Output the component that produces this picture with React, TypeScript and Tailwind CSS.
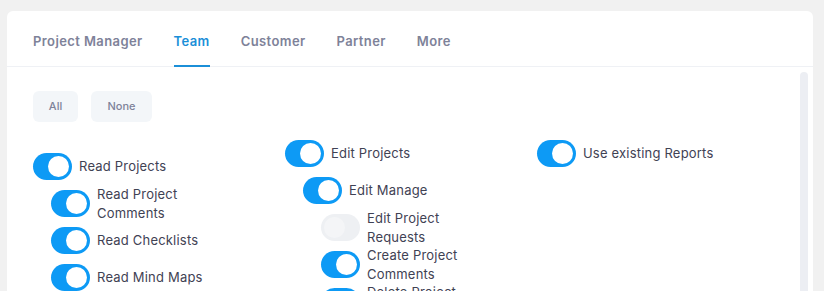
import React from 'react';

type Perm = { label: string; on: boolean; level: number };

const columns: { offset: string; items: Perm[] }[] = [
  {
    offset: 'mt-[13px]',
    items: [
      { label: 'Read Projects', on: true, level: 0 },
      { label: 'Read Project Comments', on: true, level: 1 },
      { label: 'Read Checklists', on: true, level: 1 },
      { label: 'Read Mind Maps', on: true, level: 1 },
    ],
  },
  {
    offset: 'mt-0',
    items: [
      { label: 'Edit Projects', on: true, level: 0 },
      { label: 'Edit Manage', on: true, level: 1 },
      { label: 'Edit Project Requests', on: false, level: 2 },
      { label: 'Create Project Comments', on: true, level: 2 },
      { label: 'Delete Project Comments', on: true, level: 2 },
    ],
  },
  {
    offset: 'mt-0',
    items: [{ label: 'Use existing Reports', on: true, level: 0 }],
  },
];

const tabs = ['Project Manager', 'Team', 'Customer', 'Partner', 'More'];

function Toggle({ on }: { on: boolean }) {
  return (
    <div
      className={`w-[39px] h-[27px] shrink-0 rounded-full flex items-center px-[3px] ${
        on ? 'bg-[#0d9af5] justify-end' : 'bg-[#eef0f3] justify-start'
      }`}
    >
      <div className={`w-[21px] h-[21px] rounded-full ${on ? 'bg-white' : 'bg-[#f4f5f7]'}`} />
    </div>
  );
}

function Row({ p }: { p: Perm }) {
  const indent = p.level === 0 ? 'pl-0' : p.level === 1 ? 'pl-[18px]' : 'pl-[36px]';
  return (
    <div className={`flex items-center h-[27px] mb-[10px] ${indent}`}>
      <Toggle on={p.on} />
      <span
        className={`ml-[7px] text-[13px] leading-[19px] tracking-[0.2px] text-[#3f4254] ${
          p.level > 0 ? 'max-w-[118px]' : 'whitespace-nowrap'
        }`}
      >
        {p.label}
      </span>
    </div>
  );
}

export default function App() {
  return (
    <div
      className="h-screen overflow-hidden bg-[#f1f1f1] pt-[11px] pl-[7px] pr-[11px]"
      style={{ fontFamily: 'Inter, "Noto Sans", sans-serif' }}
    >
      <div className="bg-white rounded-[6px] h-[400px] flex flex-col">
        {/* Tabs */}
        <div className="flex items-end h-[56px] pl-[26px] gap-[31px] border-b border-[#eff1f5]">
          {tabs.map(tab => (
            <div
              key={tab}
              className={`h-full flex items-center pt-[6px] text-[13px] font-semibold tracking-[0.4px] border-b-2 -mb-px ${
                tab === 'Team' ? 'text-[#1b8fd8] border-[#1b8fd8]' : 'text-[#7e8299] border-transparent'
              }`}
            >
              {tab}
            </div>
          ))}
        </div>

        <div className="flex flex-1">
          <div className="flex-1 pl-[26px] pt-[24px]">
            <div className="flex gap-[13px]">
              <button className="w-[45px] h-[31px] rounded-[6px] bg-[#f3f6f9] text-[11px] font-medium text-[#7e8299]">
                All
              </button>
              <button className="w-[61px] h-[31px] rounded-[6px] bg-[#f3f6f9] text-[11px] font-medium text-[#7e8299]">
                None
              </button>
            </div>

            <div className="grid grid-cols-[252px_252px_252px] mt-[18px]">
              {columns.map((col, i) => (
                <div key={i} className={col.offset}>
                  {col.items.map(p => (
                    <Row key={p.label} p={p} />
                  ))}
                </div>
              ))}
            </div>
          </div>
          <div className="w-[8px] mr-[5px] mt-[5px] rounded-full bg-[#eceef3]" />
        </div>
      </div>
    </div>
  );
}
